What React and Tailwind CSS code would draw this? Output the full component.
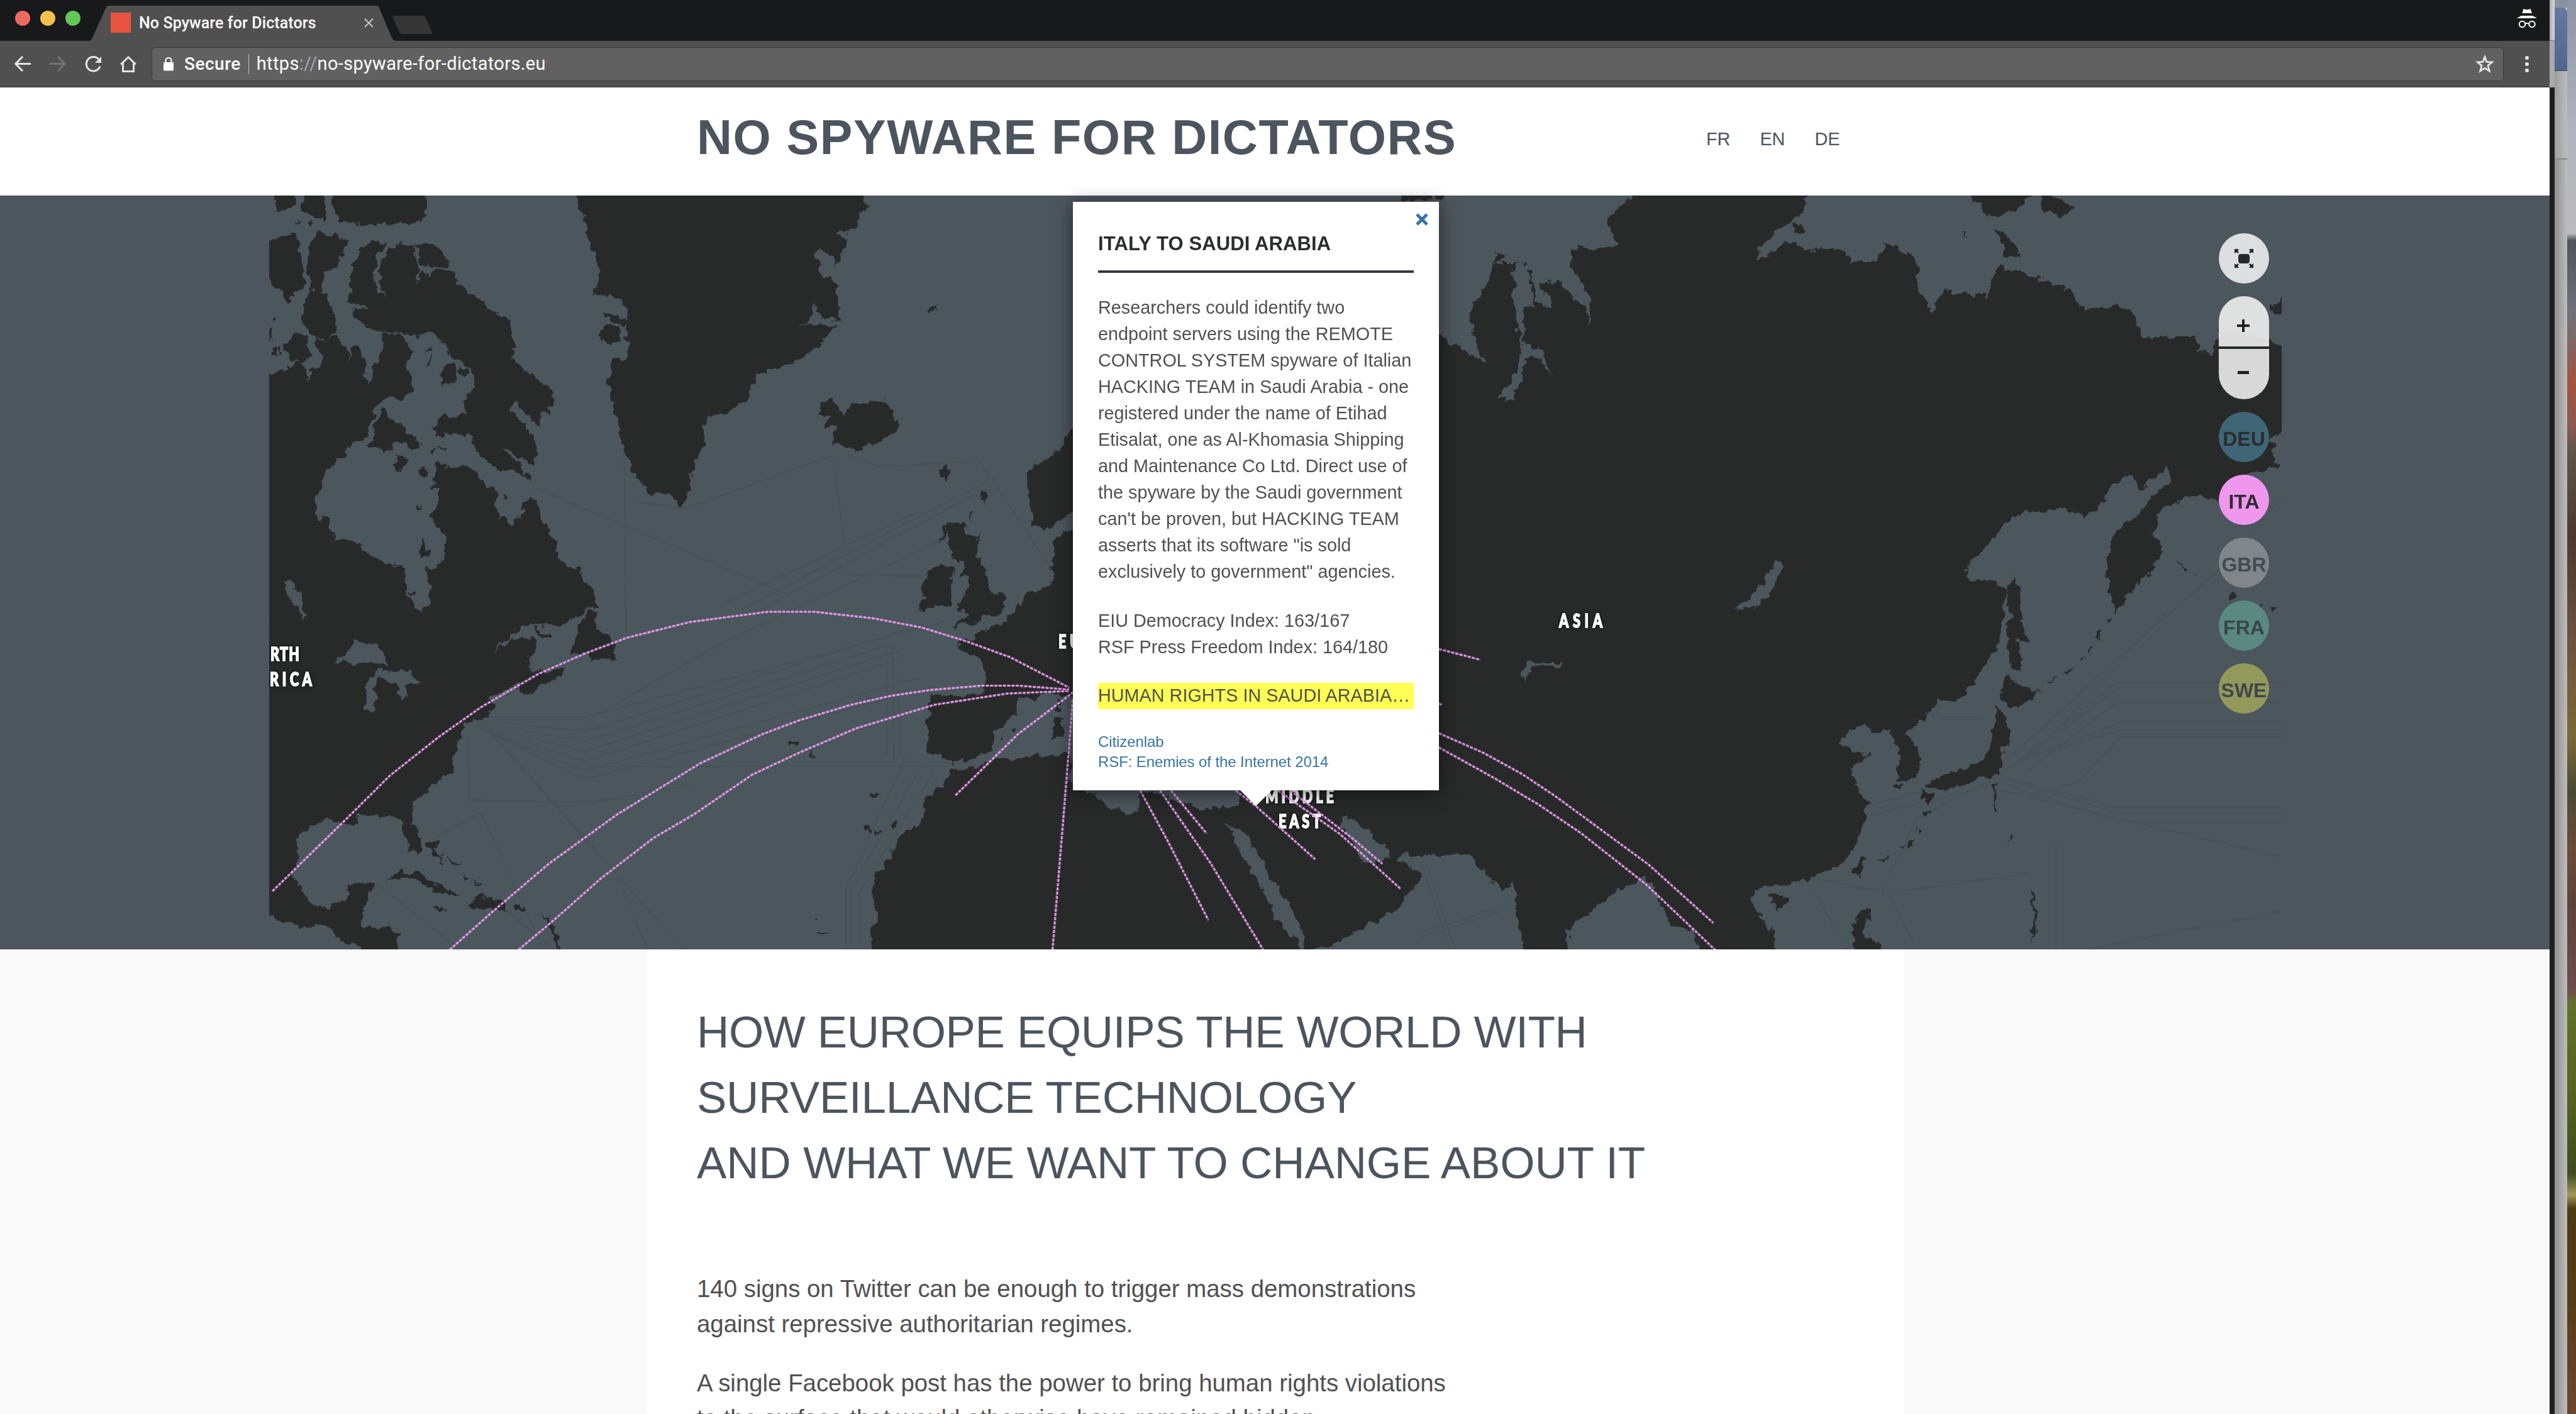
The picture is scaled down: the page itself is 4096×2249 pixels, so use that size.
const LAND = "#282a2a";
const SEA = "#4c565d";

const canada = "M-40,620 L65,618 L85,585 L110,580 L135,620 L140,645 L150,605 L180,580 L185,500 L225,490 L240,510 L262,540 L265,580 L275,525 L290,520 L308,545 L312,620 L328,655 L340,640 L335,590 L355,590 L360,550 L370,540 L365,478 L410,478 L440,495 L462,540 L450,570 L445,605 L462,640 L460,680 L430,710 L405,705 L365,710 L350,740 L340,770 L325,820 L310,850 L272,860 L255,900 L215,935 L185,985 L165,1040 L162,1080 L165,1120 L198,1122 L208,1170 L218,1200 L250,1193 L295,1212 L330,1250 L375,1278 L442,1288 L443,1375 L465,1410 L490,1445 L518,1410 L512,1350 L497,1300 L530,1290 L562,1245 L563,1190 L545,1150 L515,1120 L530,1095 L543,1060 L535,1020 L520,1020 L538,980 L530,930 L600,945 L630,935 L660,965 L685,1000 L722,1012 L725,1080 L740,1115 L768,1142 L800,1115 L815,1065 L832,1040 L860,1100 L885,1150 L905,1190 L912,1240 L940,1280 L985,1305 L1000,1340 L1030,1370 L1038,1420 L985,1450 L940,1490 L800,1495 L740,1550 L700,1600 L-40,1600 Z";
const arcticIslands = [
  "M380,165 L340,160 L305,180 L280,230 L268,290 L263,370 L310,385 L325,395 L278,395 L285,425 L320,455 L350,470 L410,475 L480,490 L510,470 L540,485 L570,530 L600,570 L640,600 L655,660 L615,715 L630,760 L590,775 L545,768 L528,800 L535,835 L600,830 L640,835 L660,880 L700,935 L760,955 L815,975 L800,940 L740,875 L800,910 L835,940 L845,890 L820,810 L775,750 L780,710 L810,750 L858,800 L865,760 L885,755 L908,695 L890,665 L855,640 L800,590 L762,560 L785,525 L770,460 L750,420 L700,400 L685,365 L645,345 L605,310 L595,270 L545,255 L510,285 L490,265 L475,305 L480,240 L465,175 L430,168 L385,190 L362,230 L362,290 L370,325 L380,355 L358,340 L343,270 L355,200 Z",
  "M470,170 L540,180 L560,200 L578,245 L520,250 L487,235 Z",
  "M25,-30 L95,-30 L95,40 L75,55 L35,52 Z",
  "M120,-30 L190,-30 L190,88 L160,85 L122,50 Z",
  "M212,-30 L500,-30 L505,60 L490,95 L420,100 L300,105 L290,95 L225,85 L215,40 Z",
  "M-20,165 L95,135 L112,170 L108,205 L120,240 L125,320 L90,350 L70,375 L20,290 L-20,270 Z",
  "M145,150 L185,130 L220,145 L262,152 L225,255 L190,260 L188,285 L172,325 L205,370 L230,455 L200,500 L150,490 L120,450 L122,370 L150,320 L135,250 Z",
  "M55,535 L95,475 L130,490 L150,560 L110,580 L80,565 Z",
  "M160,440 L170,500 L200,510 L190,560 L165,550 Z",
  "M70,590 L110,580 L135,610 L95,625 Z",
  "M26,420 L40,430 L34,445 Z M26,535 L44,530 L40,558 L28,555 Z M-10,455 L22,460 L20,505 L-10,510 Z M92,100 L105,90 L100,105 Z M135,92 L150,90 L145,102 Z",
  "M370,730 L400,780 L450,820 L485,865 L470,885 L415,855 L390,890 L370,900 L360,875 L325,875 L345,845 L347,780 Z",
  "M400,935 L415,910 L450,908 L440,935 L415,955 Z M485,945 L508,940 L500,985 L484,970 Z M522,885 L540,880 L535,900 Z M545,872 L567,880 L560,890 Z",
  "M552,620 L560,590 L590,583 L603,610 L598,640 L575,660 L552,655 Z M605,600 L635,600 L638,620 L610,622 Z M503,545 L525,515 L525,540 Z M508,590 L520,558 L522,585 Z M548,510 L560,505 L560,530 Z M565,540 L590,545 L570,560 Z",
  "M490,1190 L498,1185 L500,1210 L520,1240 L510,1258 L488,1255 Z M475,1085 L492,1070 L485,1092 Z M750,1035 L763,1040 L752,1055 Z M815,965 L830,965 L832,998 L818,985 Z M448,1375 L475,1378 L465,1390 Z",
  "M1060,410 L1100,415 L1130,440 L1115,455 L1070,435 Z M1050,455 L1080,445 L1115,480 L1115,505 L1075,525 L1048,495 Z",
];
const west = [
  "M-10,880 L600,893 L520,893 L480,930 L462,952 L500,918 L540,920 L545,940 L530,965 L540,985 L575,990 L605,978 L600,990 L560,1015 L525,1038 L513,1030 L515,1010 L460,1040 L465,1070 L440,1085 L410,1095 L385,1160 L388,1190 L340,1225 L310,1255 L308,1290 L325,1340 L322,1368 L305,1350 L290,1320 L285,1295 L275,1285 L240,1280 L205,1283 L200,1298 L175,1298 L145,1290 L100,1310 L88,1330 L90,1370 L80,1400 L95,1440 L130,1470 L165,1465 L180,1455 L183,1430 L210,1420 L232,1425 L215,1475 L212,1508 L250,1510 L283,1520 L278,1580 L260,1580 L170,1535 L140,1505 L100,1510 L34,1487 L-10,1470 Z",
  "M660,860 L640,870 L610,950 L645,950 L650,968 L675,960 L698,970 L700,940 L685,910 L662,905 Z M538,898 L580,915 L565,918 L542,908 Z",
  "M258,1415 L285,1395 L320,1398 L350,1420 L400,1443 L360,1440 L320,1412 L285,1408 Z M415,1465 L428,1447 L470,1452 L495,1472 L440,1476 Z M350,1468 L378,1472 L360,1480 Z M502,1468 L528,1470 L525,1477 L502,1476 Z",
  "M335,1335 L360,1338 L350,1350 L370,1380 L355,1370 Z M375,1365 L395,1385 L388,1390 Z M400,1400 L420,1412 L410,1412 Z M425,1415 L448,1422 L440,1425 Z M560,1480 L575,1500 L588,1540 L585,1556 L578,1530 Z",
  "M618,-20 L625,30 L640,60 L645,100 L655,130 L665,170 L657,220 L690,215 L718,250 L722,345 L692,350 L685,400 L690,440 L705,490 L715,540 L735,580 L760,620 L800,625 L825,648 L835,630 L850,560 L865,530 L870,480 L880,465 L915,460 L950,430 L970,380 L1000,370 L1060,345 L1085,320 L1125,282 L1065,278 L1045,288 L1070,270 L1080,235 L1092,270 L1128,270 L1125,200 L1090,170 L1083,120 L1120,145 L1120,165 L1130,130 L1145,105 L1120,95 L1160,80 L1160,50 L1186,40 L1155,-20 Z",
  "M1090,435 L1110,430 L1130,450 L1135,468 L1150,440 L1200,435 L1215,430 L1225,450 L1240,475 L1235,500 L1200,520 L1165,535 L1110,520 L1120,490 L1095,490 L1110,465 L1088,462 Z",
  "M1335,685 L1365,682 L1370,705 L1397,708 L1388,745 L1405,775 L1415,815 L1428,828 L1447,830 L1440,865 L1400,882 L1345,895 L1370,870 L1350,855 L1372,830 L1375,800 L1358,790 L1365,765 L1340,750 L1335,715 Z",
  "M1290,795 L1320,767 L1345,775 L1340,850 L1290,863 L1280,855 L1290,835 L1282,815 Z M1325,690 L1335,690 L1325,725 Z M1318,570 L1338,568 L1330,598 Z M1400,615 L1412,618 L1402,645 Z M1380,660 L1388,660 L1380,682 Z M1300,245 L1315,238 L1302,257 Z",
  "M1620,440 L1568,500 L1550,535 L1510,560 L1490,575 L1490,640 L1500,685 L1525,698 L1568,665 L1620,640 Z",
  "M1620,680 L1568,698 L1540,715 L1535,780 L1540,805 L1490,825 L1460,870 L1440,890 L1400,905 L1385,920 L1350,930 L1375,950 L1400,970 L1408,1000 L1400,1035 L1350,1040 L1300,1035 L1297,1080 L1295,1150 L1330,1165 L1345,1175 L1385,1165 L1420,1145 L1425,1110 L1465,1075 L1475,1045 L1500,1045 L1530,1030 L1568,1035 L1620,1060 Z",
  "M1538,1080 L1556,1080 L1556,1120 L1538,1125 Z M1543,1045 L1553,1045 L1552,1070 L1543,1068 Z M1455,1108 L1470,1105 L1465,1115 Z M1438,1125 L1445,1122 L1442,1132 Z",
  "M1025,1128 L1052,1128 L1040,1138 L1028,1136 Z M1072,1145 L1080,1160 L1072,1158 Z M1185,1235 L1200,1238 L1192,1243 Z M1175,1308 L1188,1305 L1180,1320 Z M1195,1308 L1210,1312 L1200,1318 Z M1228,1300 L1240,1298 L1230,1318 Z M1075,1490 L1085,1492 L1080,1497 Z M1085,1518 L1105,1520 L1092,1526 Z",
];
const africaArabia = [
  "M218,600 L210,650 L200,690 L165,740 L160,870 L110,930 L90,1050 L65,1120 L60,1180 L70,1290 L55,1400 L65,1530 L925,1530 L905,1400 L870,1330 L840,1160 L810,1060 L790,960 L770,870 L790,900 L815,925 L840,1040 L870,1160 L905,1290 L925,1380 L930,1530 L940,1475 L1000,1430 L1060,1350 L1110,1290 L1140,1200 L1165,1130 L1150,1080 L1115,1040 L1115,985 L1085,1050 L1050,1060 L1040,1020 L1000,870 L1010,835 L1030,850 L1080,970 L1120,960 L1140,1010 L1190,1025 L1260,1020 L1300,1130 L1330,1185 L1350,1150 L1350,600 L800,600 L800,740 L790,790 L740,795 L725,800 L690,775 L660,760 L640,725 L600,715 L595,790 L580,825 L545,800 L520,750 L480,720 L455,680 L462,540 L360,550 L290,580 L240,622 L228,595 Z",
];
const asia = [
  "M-60,1360 L90,1362 L105,1390 L125,1405 L145,1435 L162,1420 L170,1490 L190,1580 L262,1580 L262,1515 L300,1480 L350,1430 L380,1420 L400,1405 L415,1430 L430,1470 L445,1510 L485,1515 L495,1580 L633,1580 L625,1520 L600,1480 L587,1450 L600,1430 L630,1425 L700,1410 L755,1375 L790,1300 L795,1260 L775,1220 L762,1200 L785,1165 L800,1157 L765,1150 L738,1130 L790,1090 L800,1110 L835,1110 L850,1150 L845,1210 L870,1210 L887,1195 L885,1150 L865,1110 L895,1085 L920,1045 L950,1050 L985,1010 L1025,940 L1035,880 L1042,820 L1010,795 L985,800 L965,780 L1010,725 L1055,665 L1140,655 L1180,670 L1205,655 L1230,605 L1260,585 L1280,615 L1315,585 L1330,560 L1330,600 L1270,670 L1235,705 L1220,750 L1222,800 L1235,870 L1265,820 L1300,780 L1320,740 L1305,705 L1320,650 L1350,640 L1385,625 L1420,640 L1470,580 L1525,570 L1510,510 L1560,480 L1560,340 L1500,305 L1420,290 L1410,335 L1385,330 L1375,300 L1300,305 L1278,290 L1270,255 L1240,240 L1185,252 L1145,200 L1090,180 L1030,160 L1012,185 L1010,220 L930,208 L908,255 L890,210 L880,145 L850,125 L825,110 L810,150 L750,145 L750,120 L690,130 L660,105 L590,150 L620,100 L680,50 L690,-20 L390,-20 L370,20 L330,70 L350,115 L265,125 L270,170 L300,220 L300,280 L290,240 L240,190 L210,195 L235,242 L205,235 L195,170 L185,150 L130,155 L150,140 L135,130 L115,200 L85,250 L95,310 L112,355 L30,300 L-60,290 Z",
  "M1055,790 L1065,830 L1070,890 L1085,930 L1062,920 L1070,985 L1048,980 L1045,920 L1050,860 L1042,815 Z",
  "M1040,995 L1065,1015 L1100,1030 L1065,1065 L1030,1045 Z M1025,1065 L1045,1080 L1050,1110 L1035,1150 L1030,1195 L985,1210 L960,1220 L930,1230 L905,1225 L900,1215 L940,1195 L985,1180 L1010,1150 L1020,1100 Z M890,1225 L915,1235 L905,1265 L890,1245 Z",
  "M785,1360 L793,1370 L780,1410 L768,1400 Z M625,1440 L655,1450 L635,1473 L622,1460 Z M785,1465 L800,1475 L790,1530 L820,1545 L825,1580 L780,1580 L765,1510 Z M845,1220 L860,1220 L850,1228 Z",
  "M980,-20 L1095,-20 L1085,14 L1060,45 L1010,60 L985,25 Z M1100,-20 L1130,20 L1162,40 L1140,58 L1105,40 Z M1022,85 L1038,90 L1050,105 L1068,138 L1040,135 L1033,110 Z M962,85 L975,102 L968,100 Z M660,75 L680,70 L685,90 L668,90 Z",
  "M1515,240 L1532,220 L1560,200 L1560,255 L1520,255 Z M1350,765 L1365,782 L1355,780 Z M1375,785 L1383,790 L1376,788 Z M1437,828 L1450,830 L1442,840 Z M1485,848 L1500,850 L1490,860 Z M1510,855 L1530,858 L1515,865 Z",
  "M1215,885 L1232,875 L1222,895 Z M1203,905 L1212,903 L1206,925 Z M1188,940 L1196,935 L1190,952 Z M1170,965 L1180,960 L1174,970 Z M1140,990 L1165,978 L1150,993 Z M1110,1012 L1135,998 L1120,1012 Z M1085,1040 L1108,1020 L1092,1040 Z",
  "M895,1275 L905,1272 L900,1285 Z M885,1305 L893,1310 L887,1320 Z M865,1335 L878,1330 L868,1348 Z M850,1345 L862,1342 L853,1350 Z M812,1372 L838,1370 L820,1378 Z M1018,1215 L1022,1215 L1024,1275 L1020,1270 Z M1048,1320 L1052,1320 L1050,1340 Z M1085,1435 L1090,1440 L1097,1480 L1093,1520 L1085,1545 L1090,1500 L1092,1470 Z",
];
const lakesWest = "M158,968 L185,945 L200,925 L240,930 L262,975 L220,965 L190,970 L170,968 Z M222,1000 L245,985 L300,985 L325,1010 L300,1015 L302,1040 L290,1042 L272,1010 L245,995 L235,1020 L238,1060 L228,1072 L217,1060 Z M63,800 L78,800 L90,830 L100,860 L98,886 L88,860 L65,825 Z";
const lakesEast = [
  "M165,155 L190,150 L200,240 L180,240 L182,320 L215,330 L232,385 L210,345 L185,345 L180,390 L160,432 L130,430 L150,415 L172,370 L178,320 L165,230 Z",
  "M632,757 L640,765 L634,805 L612,838 L585,860 L560,860 L590,832 L612,805 Z",
  "M250,968 L245,978 L207,977 L192,985 L184,1007 L174,990 L190,968 L235,968 Z",
];
const cables = [
  "M740,640 L830,655 L1115,545 M540,610 L1030,830 M715,530 L718,910 M1145,545 L1210,570 L1395,555 L1535,780 M1115,550 L1145,790 L1285,792",
  "M425,1090 L640,1130 L1230,930 M425,1095 L640,1150 L1240,945 M430,1100 L640,1170 L1250,960 M440,1105 L640,1190 L1280,1000 M450,1110 L640,1207 L1300,1020 M430,1085 L640,1110 L1290,890 M425,1080 L640,1080 L1330,885",
  "M900,850 L1280,660 M940,860 L1425,590 M960,870 L1430,600 M640,1090 L900,930 L1380,690 M455,1110 L830,1556 M460,1110 L700,1400 L760,1556 M345,1330 L440,1275 L560,1556",
  "M640,1181 L1330,1180 M415,1120 L418,1250 L650,1255 L840,1220 M1218,930 L1218,1160 M1230,930 L1232,1170 M1240,1000 L1245,1160 M1260,1150 L1140,1430 L1140,1556 M1290,1170 L1150,1430 L1150,1556 M1310,1190 L1165,1440 L1168,1556 M240,1420 L400,1556 M345,1350 L580,1556",
];
const cablesEast = [
  "M1075,1160 L1240,1008 L1540,1008 M1060,1180 L1240,1020 L1540,1020 M1080,1190 L1240,1048 L1540,1048 M1080,1160 L1245,1092 L1540,1092 M1060,1170 L1245,1107 L1540,1107 M1090,1240 L1170,1213 L1245,1121 L1540,1121",
  "M1030,1200 L1240,1265 L1540,1265 M1050,1210 L1240,1277 L1540,1277 M1045,1220 L1240,1293 L1540,1293 M1030,1230 L1540,1368 M700,1410 L830,1440 L880,1550 M800,1260 L1030,1190 M800,1280 L1050,1210 M690,1420 L760,1556 M1130,1340 L1130,1556 M1180,1556 L1540,1475",
  "M1050,1160 L1280,920 L1430,770 L1540,620 M1040,1190 L1130,1110 L1330,860 M920,1045 L920,1080 L1000,1080 M820,1440 L880,1290 L1030,1200 M830,1440 L1080,1400 M0,1380 L50,1556 M10,1380 L60,1556 M0,1520 L165,1460 M0,1530 L165,1470",
];
const arcsWest = [
  "M40,1436 L185,1285 L265,1200 L360,1120 L440,1060 L550,992 L640,950 L720,918 L840,886 L990,865 L1080,865 L1190,878 L1285,897 L1370,925 L1455,958 L1568,1020",
  "M380,1556 L460,1480 L570,1380 L700,1280 L860,1175 L980,1115 L1050,1087 L1150,1055 L1225,1037 L1300,1025 L1400,1016 L1470,1016 L1568,1024",
  "M512,1556 L580,1495 L670,1410 L770,1328 L850,1278 L960,1198 L1050,1153 L1160,1103 L1310,1055 L1450,1032 L1568,1027",
  "M1350,1240 L1470,1115 L1575,1030",
  "M1575,1045 L1557,1285 L1536,1557",
];
const arcsMiddle = [
  "M598,712 L655,960 L735,1330",
  "M638,712 L740,1060 L845,1470",
  "M660,712 L732,918",
  "M790,712 L830,785 L950,1040",
  "M875,712 L1000,920 L1122,1182",
  "M900,712 L1030,950 L1085,1062",
];
const arcsEast = [
  "M31,941 L105,963",
  "M31,1053 L37,1055",
  "M31,1113 L110,1153 L180,1197 L240,1243 L405,1382 L520,1501",
  "M31,1142 L130,1205 L210,1260 L285,1318 L400,1422 L525,1558",
];

const T_NORTHWEST = "translate(420 310) scale(.5102 .4592)";
const T_WEST = "translate(400 300) scale(.8291 .7781)";
const T_MIDDLE = "translate(1340 1020) scale(.7908 .3333)";
const T_EAST = "translate(2260 300) scale(.8929 .7781)";

const labels = [
  ["RTH", 430, 1051, 46],
  ["RICA", 429, 1091, 67],
  ["EU", 1683, 1031, 34],
  ["ASIA", 2479, 998, 69],
  ["MIDDLE", 2012, 1277, 109],
  ["EAST", 2033, 1317, 67],
];

function Shapes({ list, transform, ...rest }) {
  return (
    <g transform={transform} {...rest}>
      {list.map((d, i) => (
        <path key={i} d={d} vectorEffect="non-scaling-stroke" />
      ))}
    </g>
  );
}

function MapLabels(props) {
  return (
    <g fontFamily="Lato, sans-serif" fontWeight="900" fontSize="30" {...props}>
      {labels.map(([t, x, y, w]) => (
        <text key={t} transform={`translate(${x} ${y}) scale(.72 1)`} textLength={w / 0.72} lengthAdjust="spacing">{t}</text>
      ))}
    </g>
  );
}

function WorldMap() {
  return (
    <svg className="block h-full w-full" viewBox="428 311 3200 1199" preserveAspectRatio="none">
      <defs>
        <filter id="coast" filterUnits="userSpaceOnUse" x="400" y="280" width="3260" height="1260" colorInterpolationFilters="sRGB">
          <feTurbulence type="fractalNoise" baseFrequency="0.07" numOctaves="3" seed="4" result="n" />
          <feDisplacementMap in="SourceGraphic" in2="n" scale="18" xChannelSelector="R" yChannelSelector="G" />
        </filter>
        <filter id="halo" x="-20%" y="-20%" width="140%" height="140%">
          <feDropShadow dx="0" dy="0" stdDeviation="2.5" floodColor="#000" floodOpacity=".9" />
        </filter>
      </defs>
      <rect x="428" y="311" width="3200" height="1199" fill={SEA} />
      <g fill="none" stroke="#434a52" strokeWidth="1.5" opacity=".4">
        <Shapes list={cables} transform={T_WEST} />
        <Shapes list={cablesEast} transform={T_EAST} />
      </g>
      <g filter="url(#coast)">
        <g fill={LAND}>
          <Shapes list={[canada, ...arcticIslands]} transform={T_NORTHWEST} />
          <Shapes list={west} transform={T_WEST} />
          <Shapes list={africaArabia} transform={T_MIDDLE} />
          <Shapes list={asia} transform={T_EAST} />
          <path d="M2235,300 L2310,300 L2295,314 L2224,322 Z" />
        </g>
        <g fill={SEA}>
          <Shapes list={[lakesWest]} transform={T_WEST} />
          <Shapes list={lakesEast} transform={T_EAST} />
        </g>
      </g>
      <MapLabels fill="#fff" stroke="#fff" strokeWidth="1.6" filter="url(#halo)" />
      <g fill="none" stroke="#ea9dee" strokeWidth="3.2" strokeDasharray="5 1.800">
        <Shapes list={arcsWest} transform={T_WEST} />
        <Shapes list={arcsMiddle} transform={T_MIDDLE} />
        <Shapes list={arcsEast} transform={T_EAST} />
      </g>
    </svg>
  );
}

function Chrome() {
  return (
    <div className="h-[139px] w-[4054px] border-b border-[#2b2b2b] bg-[#505050] text-white">
      <div className="flex h-[65px] items-start bg-[#17191b]">
        <div className="flex gap-4 pl-6 pt-[17px]">
          <i className="size-6 rounded-full bg-[#ec6b60]" />
          <i className="size-6 rounded-full bg-[#f5c04f]" />
          <i className="size-6 rounded-full bg-[#62c756]" />
        </div>
        <div className="relative ml-[15px] mt-[9px] h-[56px] w-[486px]">
          <svg className="absolute inset-0" width="486" height="56" viewBox="0 0 486 56">
            <path d="M0 56 Q2 55 4 51 L25 4 Q27 0 31 0 H455 Q459 0 460 4 L480 51 Q482 55 486 56Z" fill="#505050" />
          </svg>
          <div className="relative flex h-full items-center pl-[33px] font-['Roboto',sans-serif] text-[25px]">
            <i className="-mt-0.5 size-8 bg-[#e8543f]" />
            <span className="ml-[13px] whitespace-nowrap font-medium tracking-[0.1px]">No Spyware for Dictators</span>
            <svg className="absolute left-[436px] top-[20px]" width="15" height="15" viewBox="0 0 15 15" stroke="#c8c8c8" strokeWidth="2">
              <path d="M1 1 14 14M14 1 1 14" />
            </svg>
          </div>
        </div>
        <svg className="-ml-1.5 mt-6" width="66" height="31" viewBox="0 0 66 31">
          <path d="M4 1 H49 Q53 1 54 4 L64 28 Q65 30 62 30 H17 Q13 30 12 27 L2 4 Q1 1 4 1Z" fill="#353535" />
        </svg>
        <svg className="ml-auto mr-5 mt-[14px]" width="32" height="31" viewBox="0 0 32 31">
          <path d="M8.500 7 10.500 0 Q16 2.500 21.500 0 L24 7Z M7 11 H25 L32 15 H0Z" fill="#fff" />
          <g fill="none" stroke="#fff" strokeWidth="2"><circle cx="8.500" cy="24.500" r="4.700" /><circle cx="24" cy="24.500" r="4.700" /><path d="M13 24 Q16 22 19.500 24" /></g>
        </svg>
      </div>
      <div className="flex h-[73px] items-center pl-[23px]">
        <div className="flex gap-[30px]">
          <svg width="26" height="26" viewBox="0 0 26 26" fill="none" stroke="#e6e6e6" strokeWidth="3"><path d="M26 12.500H2M13 1 1.800 12.500 13 24" /></svg>
          <svg width="26" height="26" viewBox="0 0 26 26" fill="none" stroke="#747474" strokeWidth="3"><path d="M0 12.500H24M13 1 24.200 12.500 13 24" /></svg>
          <svg width="26" height="26" viewBox="0 0 26 26" fill="none" stroke="#e6e6e6" strokeWidth="3"><path d="M22 5.500A11.200 11.200 0 1 0 24 16.500" /><path d="M27 0V11H16Z" fill="#e6e6e6" stroke="none" /></svg>
          <svg width="26" height="26" viewBox="0 0 26 26" fill="none" stroke="#e6e6e6" strokeWidth="3"><path d="M1 13.500 13 2 25 13.500M4.500 11V24.500H21.500V11" /></svg>
        </div>
        <div className="ml-6 flex h-[54px] w-[3740px] items-center rounded-md border border-[#3a3a3a] bg-[#616161] pl-[18px] font-['Roboto',sans-serif] text-[28px]">
          <svg width="16" height="22" viewBox="0 0 16 22"><rect y="8" width="16" height="13.500" rx="1.500" fill="#fff" /><path d="M3.500 9V5.500a4.500 4.500 0 0 1 9 0V9" fill="none" stroke="#fff" strokeWidth="2.200" /></svg>
          <span className="ml-[17px] font-medium tracking-[0.5px]">Secure</span>
          <i className="ml-[12px] h-8 w-px bg-[#c0c0c0]" />
          <span className="ml-[12px] text-[29px] tracking-[0.35px]">https<span className="text-[#a8a8a8]">://</span>no-spyware-for-dictators.eu</span>
          <svg className="ml-auto mr-3.5" width="30" height="29" viewBox="0 0 30 29" fill="none" stroke="#e6e6e6" strokeWidth="2.800"><path d="M15 3.500 18 11.500 26.500 12 20 17.500 22.300 26 15 21.300 7.700 26 10 17.500 3.500 12 12 11.500Z" /></svg>
        </div>
        <div className="ml-[34px] flex flex-col gap-1">
          <i className="size-1.5 rounded-full bg-[#e6e6e6]" />
          <i className="size-1.5 rounded-full bg-[#e6e6e6]" />
          <i className="size-1.5 rounded-full bg-[#e6e6e6]" />
        </div>
      </div>
    </div>
  );
}

const popupLines = [
  "Researchers could identify two",
  "endpoint servers using the REMOTE",
  "CONTROL SYSTEM spyware of Italian",
  "HACKING TEAM in Saudi Arabia - one",
  "registered under the name of Etihad",
  "Etisalat, one as Al-Khomasia Shipping",
  "and Maintenance Co Ltd. Direct use of",
  "the spyware by the Saudi government",
  "can't be proven, but HACKING TEAM",
  'asserts that its software "is sold',
  'exclusively to government" agencies.',
];

function Popup() {
  return (
    <div className="absolute left-[1706px] top-[10px] h-[936px] w-[582px] bg-white px-10 pt-[46px] text-[28.8px] leading-[42px] text-[#505050] shadow-[0_4px_26px_rgba(0,0,0,0.55)]">
      <svg className="absolute right-[17px] top-[18px]" width="20" height="20" viewBox="0 0 20 20" stroke="#3874a4" strokeWidth="5"><path d="M2 2 18 18M18 2 2 18" /></svg>
      <h2 className="whitespace-nowrap text-[31px] font-bold tracking-[0.1px] text-[#2b2d2f]">ITALY TO SAUDI ARABIA</h2>
      <hr className="mt-[21px] border-t-4 border-[#35383b]" />
      <p className="mt-[34px]">
        {popupLines.map((l) => (
          <span key={l} className="block whitespace-nowrap">{l}</span>
        ))}
      </p>
      <p className="mt-9">
        EIU Democracy Index: 163/167
        <br />
        RSF Press Freedom Index: 164/180
      </p>
      <p className="mt-9 whitespace-nowrap bg-[#ffff55] leading-[41px] pb-px">HUMAN RIGHTS IN SAUDI ARABIA…</p>
      <p className="mt-9 text-[24px] leading-8 tracking-[-0.1px] text-[#3874a4]">
        Citizenlab
        <br />
        RSF: Enemies of the Internet 2014
      </p>
      <svg className="absolute left-[266px] top-full" width="50" height="26" viewBox="0 0 50 26"><path d="M0 0H50L25 25Z" fill="#fff" /></svg>
    </div>
  );
}

const countries = [
  ["DEU", "bg-[#3f6676] text-[#2a2e31]"],
  ["ITA", "bg-[#ee97ec] text-[#2f2c31]"],
  ["GBR", "bg-[#80868a] text-[#454a4e]"],
  ["FRA", "bg-[#5a8982] text-[#3b4649]"],
  ["SWE", "bg-[#93995b] text-[#40474a]"],
];

function Controls() {
  return (
    <div className="absolute left-[3528px] top-[60px] flex w-20 flex-col gap-5">
      <div className="flex size-20 items-center justify-center rounded-full bg-[#dcdee0]">
        <svg width="30" height="30" viewBox="0 0 30 30" fill="#26282a"><rect x="6" y="8" width="18" height="15" rx="4" /><path d="M0 0H7L5 3 7 5 5 7 3 5 0 7ZM30 0H23L25 3 23 5 25 7 27 5 30 7ZM0 30H7L5 27 7 25 5 23 3 25 0 23ZM30 30H23L25 27 23 25 25 23 27 25 30 23Z" /></svg>
      </div>
      <div className="overflow-hidden rounded-[40px]">
        <div className="flex h-20 items-center justify-center bg-[rgba(236,236,236,0.92)]">
          <svg width="20" height="20" viewBox="0 0 20 20" className="mr-0.5 mt-3.5" stroke="#222" strokeWidth="4"><path d="M0 10H20M10 0V20" /></svg>
        </div>
        <div className="h-1 bg-[#26282a]" />
        <div className="flex h-20 items-center justify-center bg-[rgba(236,236,236,0.9)]">
          <svg width="18" height="5" viewBox="0 0 18 5" className="-mt-1.5 mr-0.5"><path d="M0 0H18V5H0Z" fill="#222" /></svg>
        </div>
      </div>
      {countries.map(([c, cls]) => (
        <div key={c} className={`flex size-20 items-center justify-center rounded-full pt-[5px] text-[32px] font-bold ${cls}`}>{c}</div>
      ))}
    </div>
  );
}

function Desktop() {
  return (
    <div className="flex h-full flex-1 bg-[#b9bdc6]">
      <div className="flex w-2 flex-col">
        <div className="h-[65px] border-b border-[#777] bg-[linear-gradient(90deg,#a8a8a8,#dcdcdc)]" />
        <div className="h-[74px] bg-[#a9a9a9]" />
        <div className="flex-1 bg-[#1e1e1e]" />
      </div>
      <div className="w-5">
        <div className="h-3 bg-[#8a929f]" />
        <div className="h-[101px] rounded-tr-lg border-b-2 border-[#3f5078] bg-[linear-gradient(180deg,#6679a0,#50658f)]" />
        <div className="h-[141px] border-b-2 border-[#888] bg-[linear-gradient(90deg,#9d9d9d,#bdbdbd)]" />
        <div className="h-[1995px] bg-[linear-gradient(90deg,#8f8f8f,#bdbdbd)]" />
      </div>
      <div className="flex-1 bg-[linear-gradient(180deg,#8b93a5_0%,#b0b4bd_9%,#bcbcbe_16.5%,#50545a_17%,#70717a_22%,#7a6a68_24%,#a5533f_27%,#8a5a50_30%,#5f5348_32%,#4a3a2e_38%,#6a5240_45%,#7a6a38_52%,#4a4a34_56%,#6b4c3a_60%,#5a4438_64%,#6e4c4c_70%,#62702c_71%,#57631f_77%,#3f4a20_83%,#a09858_84.500%,#4a3a10_85.500%,#553c18_92%,#6e4630_100%)]" />
    </div>
  );
}

export default function App() {
  return (
    <div className="flex h-[2249px] w-[4096px] overflow-hidden bg-[#222] font-['Liberation_Sans',Arial,sans-serif]">
      <div className="flex h-full w-[4054px] flex-col">
        <Chrome />
        <header className="flex h-[172px] items-center bg-white pl-[1108px] text-[#4c555e]">
          <h1 className="-mt-[14px] whitespace-nowrap text-[77.5px] font-bold tracking-[1.55px]">NO SPYWARE FOR DICTATORS</h1>
          <nav className="-mt-1.5 ml-auto flex w-[1341px] gap-[47px] text-[28.8px]">
            <span>FR</span>
            <span>EN</span>
            <span>DE</span>
          </nav>
        </header>
        <section className="relative h-[1199px] shrink-0 bg-[#4d555e] px-[428px]">
          <div className="h-full w-[3200px]">
            <WorldMap />
          </div>
          <Popup />
          <Controls />
        </section>
        <main className="flex flex-1 justify-center overflow-hidden bg-[#f9f9f9] pl-0.5">
          <article className="w-[2000px] bg-white pl-20 pt-[80px]">
            <h2 className="text-[71px] leading-[104px] text-[#4c555e]">
              <span className="tracking-[-0.35px]">HOW EUROPE EQUIPS THE WORLD WITH</span><br />
              <span className="tracking-[-0.25px]">SURVEILLANCE TECHNOLOGY</span><br />
              <span className="tracking-[-0.12px]">AND WHAT WE WANT TO CHANGE ABOUT IT</span>
            </h2>
            <div className="mt-[120px] text-[38.4px] leading-[56px] text-[#505050]">
              <p className="mb-[38px]">140 signs on Twitter can be enough to trigger mass demonstrations<br />against repressive authoritarian regimes.</p>
              <p>A single Facebook post has the power to bring human rights violations<br />to the surface that would otherwise have remained hidden.</p>
            </div>
          </article>
        </main>
      </div>
      <Desktop />
    </div>
  );
}
